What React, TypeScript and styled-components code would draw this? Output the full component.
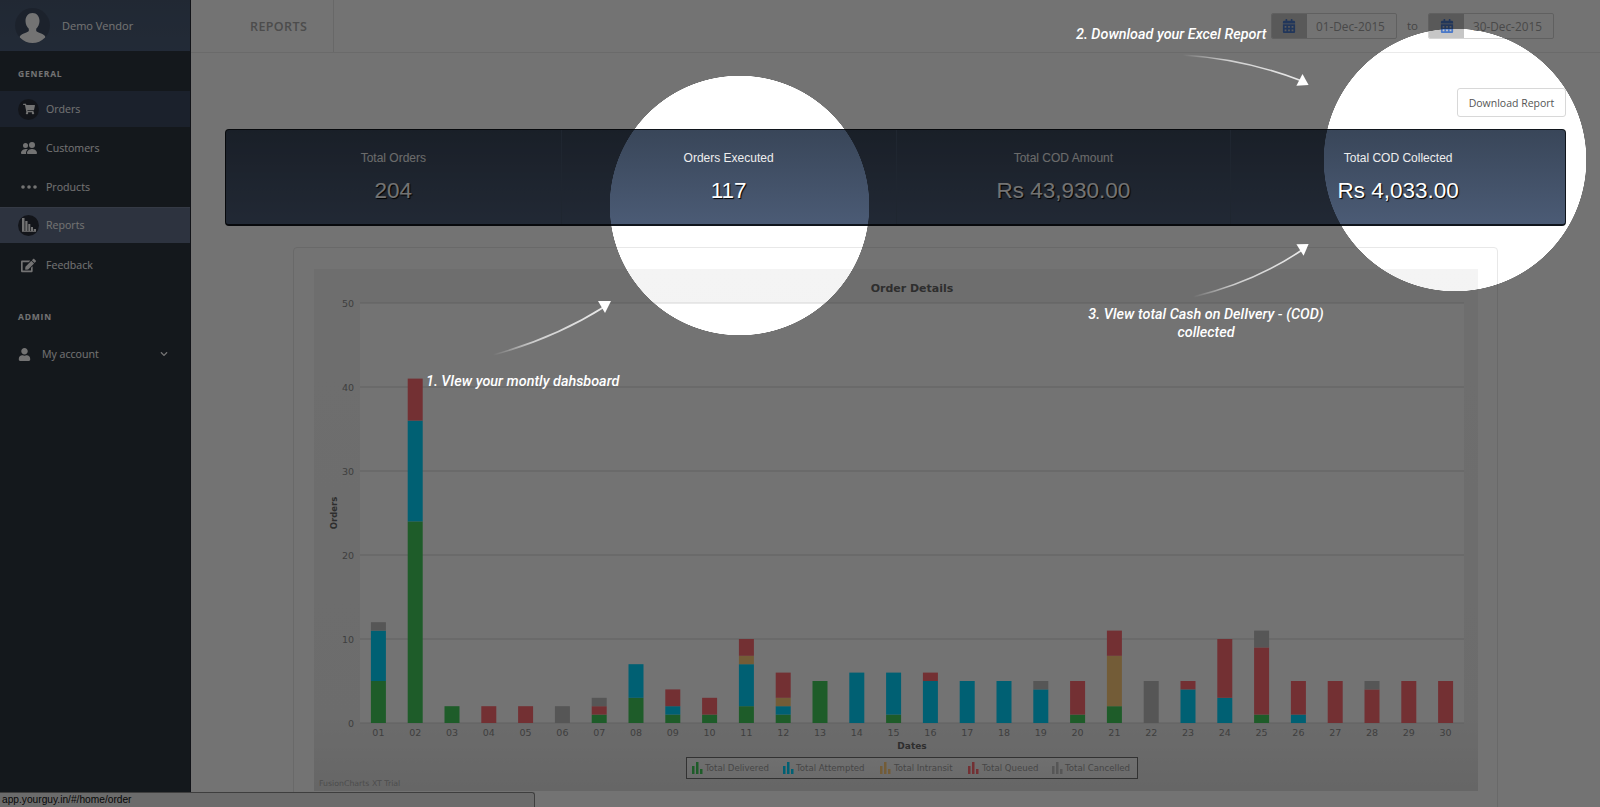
import React from "react";
import styled, { createGlobalStyle } from "styled-components";
import { FaCalendarAlt, FaChevronDown, FaEdit, FaShoppingCart, FaUser } from "react-icons/fa";
import { BsPeopleFill } from "react-icons/bs";

const GlobalStyle = createGlobalStyle`
  html, body { margin: 0; padding: 0; height: 100%; overflow: hidden; background: #fff; }
  body { font-family: "Open Sans", "Liberation Sans", sans-serif; }
  * { box-sizing: border-box; }
`;

const Page = styled.div`
  position: relative;
  display: flex;
  width: 1600px;
  height: 807px;
  overflow: hidden;
  background: #fff;
`;

// sidebar
const Sidebar = styled.aside`
  width: 191px;
  flex-shrink: 0;
  background: #2e353f;
  border-right: 1px solid #262c35;
`;

const Profile = styled.div`
  display: flex;
  align-items: center;
  gap: 12px;
  height: 51px;
  padding-left: 15px;
  background: linear-gradient(#4a5a72, #4d5e7a);
  color: #fff;
  font-size: 11px;
`;

const Avatar = styled.div`
  display: flex;
  align-items: flex-end;
  justify-content: center;
  width: 35px;
  height: 35px;
  border-radius: 50%;
  background: #3f4d63;
  overflow: hidden;
`;

const SectionLabel = styled.div<{ $height: number; $pad: number }>`
  display: flex;
  align-items: center;
  height: ${(p) => p.$height}px;
  padding: ${(p) => p.$pad}px 0 0 18px;
  color: #fff;
  font-size: 8.5px;
  font-weight: 700;
  letter-spacing: 0.8px;
`;

const Nav = styled.nav`
  display: flex;
  flex-direction: column;
  gap: 3px;
`;

const NavRow = styled.div<{ $tone?: "open" | "active" }>`
  display: flex;
  align-items: center;
  gap: 7px;
  height: 36px;
  margin: ${(p) => (p.$tone === "active" ? "-1px 0 1px" : "0")};
  padding-left: 18px;
  color: #fff;
  font-size: 10.6px;
  background: ${(p) => (p.$tone === "open" ? "#3c4962" : p.$tone === "active" ? "#65718c" : "transparent")};
  box-shadow: ${(p) => (p.$tone === "active" ? "inset 0 1px 0 #76819a" : "none")};
`;

const NavIcon = styled.span<{ $ring?: boolean }>`
  display: flex;
  align-items: center;
  justify-content: center;
  width: 21px;
  height: 21px;
  flex-shrink: 0;
  border-radius: 50%;
  background: ${(p) => (p.$ring ? "#2a303b" : "transparent")};
  color: #fff;
  font-size: 14px;
`;

const AccountRow = styled.div`
  display: flex;
  align-items: center;
  height: 36px;
  margin-top: 2px;
  padding: 0 22px 0 18px;
  color: #fff;
  font-size: 10.6px;
`;

const AccountName = styled.span`
  flex: 1;
  margin-left: 11px;
`;

// main column
const Main = styled.main`
  flex: 1;
  min-width: 0;
`;

const Topbar = styled.header`
  display: flex;
  align-items: center;
  justify-content: space-between;
  height: 53px;
  padding-right: 46px;
  border-bottom: 1px solid #eaeaea;
`;

const TopTitle = styled.div`
  display: flex;
  align-items: center;
  height: 52px;
  padding: 0 26px 0 59px;
  border-right: 1px solid #e6e6e6;
  color: #a8a8a8;
  font-size: 12.5px;
  font-weight: 600;
  letter-spacing: 0.4px;
`;

const DateRange = styled.div`
  display: flex;
  align-items: center;
  gap: 10px;
  margin-top: -1px;
  color: #9a9a9a;
  font-size: 11.5px;
`;

const DateField = styled.div`
  display: flex;
  width: 126px;
  height: 26px;
  border: 1px solid #d6d6d6;
  border-radius: 2px;
  overflow: hidden;
  background: #fff;
`;

const DateAddon = styled.span`
  display: flex;
  align-items: center;
  justify-content: center;
  width: 35px;
  background: #c6c6c6;
  color: #4a78c8;
  font-size: 14px;
`;

const DateValue = styled.span`
  flex: 1;
  padding-left: 9px;
  line-height: 24px;
  color: #a2a2a2;
  font-size: 11.8px;
`;

const Content = styled.div`
  padding: 35px 34px 0;
`;

const Actions = styled.div`
  display: flex;
  justify-content: flex-end;
`;

const DownloadButton = styled.button`
  width: 109px;
  height: 29px;
  padding: 0;
  border: 1px solid #d8d8d8;
  border-radius: 3px;
  background: #fff;
  color: #555;
  font-family: "Open Sans", sans-serif;
  font-size: 10.5px;
`;

const StatsPanel = styled.section`
  display: grid;
  grid-template-columns: repeat(4, 1fr);
  height: 97px;
  margin-top: 12px;
  border: 1px solid #10151c;
  border-bottom-width: 2px;
  border-radius: 4px;
  background: linear-gradient(#394659, #4b5b75);
`;

const StatCell = styled.div`
  display: flex;
  flex-direction: column;
  align-items: center;
  padding-top: 20px;
  border-left: 1px solid #46546a;
  font-family: "Liberation Sans", Arial, sans-serif;
  color: #fff;

  &:first-child {
    border-left: 0;
  }
`;

const StatLabel = styled.span`
  color: #eee;
  font-size: 12px;
  line-height: 16px;
`;

const StatValue = styled.span`
  margin-top: 12px;
  font-size: 22.5px;
  line-height: 26px;
  color: #fff;
  text-shadow: 1px 1px 1px #000;
`;

const ChartCard = styled.section`
  height: 600px;
  margin: 21px 68px 0;
  padding: 21px 20px;
  border: 1px solid #e8e8e8;
  border-radius: 4px;
`;

const ChartSvg = styled.svg`
  display: block;
`;

const StatusBar = styled.div`
  position: absolute;
  left: 0;
  bottom: 0;
  width: 535px;
  height: 15px;
  padding-left: 2px;
  border: 1px solid #8a8a8a;
  border-left: 0;
  border-bottom: 0;
  border-top-right-radius: 3px;
  background: #eee;
  color: #111;
  font-family: "Liberation Sans", Arial, sans-serif;
  font-size: 10.2px;
  line-height: 14px;
`;

// dim layer with the two spotlights cut out
const Dim = styled.div`
  position: absolute;
  inset: 0;
  background: rgba(0, 0, 0, 0.55);
  mask-image:
    radial-gradient(circle at 739.5px 205.5px, transparent 129.5px, #000 130px),
    radial-gradient(circle at 1455px 160px, transparent 131px, #000 131.5px);
  mask-composite: intersect;
`;

const ArrowLayer = styled.svg`
  position: absolute;
  inset: 0;
`;

const Callout = styled.div<{ $left: number; $top: number; $width?: number }>`
  position: absolute;
  left: ${(p) => p.$left}px;
  top: ${(p) => p.$top}px;
  width: ${(p) => (p.$width ? `${p.$width}px` : "auto")};
  color: #fff;
  font-family: "Roboto", sans-serif;
  font-size: 14.4px;
  font-style: italic;
  font-weight: 500;
  line-height: 18px;
  text-align: center;
  white-space: nowrap;
`;

const stats = [
  { label: "Total Orders", value: "204" },
  { label: "Orders Executed", value: "117" },
  { label: "Total COD Amount", value: "Rs 43,930.00" },
  { label: "Total COD Collected", value: "Rs 4,033.00" },
];

const colors = {
  delivered: "rgb(68,204,92)",
  attempted: "rgb(0,212,255)",
  intransit: "rgb(255,204,122)",
  queued: "rgb(255,106,114)",
  cancelled: "rgb(190,190,190)",
};

type Series = keyof typeof colors;

const order: Series[] = ["delivered", "attempted", "intransit", "queued", "cancelled"];

// delivered, attempted, intransit, queued, cancelled
const days = [
  [5, 6, 0, 0, 1], [24, 12, 0, 5, 0], [2, 0, 0, 0, 0], [0, 0, 0, 2, 0], [0, 0, 0, 2, 0],
  [0, 0, 0, 0, 2], [1, 0, 0, 1, 1], [3, 4, 0, 0, 0], [1, 1, 0, 2, 0], [1, 0, 0, 2, 0],
  [2, 5, 1, 2, 0], [1, 1, 1, 3, 0], [5, 0, 0, 0, 0], [0, 6, 0, 0, 0], [1, 5, 0, 0, 0],
  [0, 5, 0, 1, 0], [0, 5, 0, 0, 0], [0, 5, 0, 0, 0], [0, 4, 0, 0, 1], [1, 0, 0, 4, 0],
  [2, 0, 6, 3, 0], [0, 0, 0, 0, 5], [0, 4, 0, 1, 0], [0, 3, 0, 7, 0], [1, 0, 0, 8, 2],
  [0, 1, 0, 4, 0], [0, 0, 0, 5, 0], [0, 0, 0, 4, 1], [0, 0, 0, 5, 0], [0, 0, 0, 5, 0],
];

const legend: { key: Series; label: string; icon: number; text: number }[] = [
  { key: "delivered", label: "Total Delivered", icon: 378, text: 391 },
  { key: "attempted", label: "Total Attempted", icon: 469, text: 482 },
  { key: "intransit", label: "Total Intransit", icon: 566, text: 580 },
  { key: "queued", label: "Total Queued", icon: 654, text: 668 },
  { key: "cancelled", label: "Total Cancelled", icon: 738, text: 751 },
];

// chart geometry, relative to the canvas
const plotLeft = 46;
const plotRight = 1150;
const plotBottom = 454;
const unit = 8.4;
const slot = (plotRight - plotLeft) / 30;

const Chart = () => (
  <ChartSvg width={1164} height={522} fontFamily="'DejaVu Sans', sans-serif">
    <defs>
      <linearGradient id="canvasBg" x1="0" y1="0" x2="0" y2="1">
        <stop offset="0" stopColor="#f4f4f4" />
        <stop offset="0.85" stopColor="#f0f0f0" />
        <stop offset="1" stopColor="#e2e2e2" />
      </linearGradient>
      <linearGradient id="legendBg" x1="0" y1="0" x2="0" y2="1">
        <stop offset="0" stopColor="#f6f6f6" />
        <stop offset="1" stopColor="#eee" />
      </linearGradient>
    </defs>
    <rect width={1164} height={522} fill="url(#canvasBg)" />
    <rect x={plotLeft} y={34} width={plotRight - plotLeft} height={plotBottom - 34} fill="#fff" />
    <text x={598} y={23} textAnchor="middle" fontSize={11} fontWeight={700} fill="#666">Order Details</text>

    {[0, 10, 20, 30, 40, 50].map((v) => {
      const y = plotBottom - v * unit;
      return (
        <g key={v}>
          <line x1={plotLeft} x2={plotRight} y1={y} y2={y} stroke="#d6d6d6" />
          <text x={40} y={y + 3.5} textAnchor="end" fontSize={9.5} fill="#8c8c8c">{v}</text>
        </g>
      );
    })}

    {days.map((values, i) => {
      const x = plotLeft + slot * (i + 0.5);
      let base = plotBottom;
      return (
        <g key={i}>
          {values.map((v, s) => {
            if (!v) return null;
            const h = v * unit;
            base -= h;
            return <rect key={s} x={x - 7.5} y={base} width={15} height={h} fill={colors[order[s]]} />;
          })}
          <text x={x} y={467} textAnchor="middle" fontSize={9.5} fill="#8c8c8c">
            {String(i + 1).padStart(2, "0")}
          </text>
        </g>
      );
    })}

    <text x={598} y={480} textAnchor="middle" fontSize={9} fontWeight={700} fill="#666">Dates</text>
    <text x={23} y={244} textAnchor="middle" fontSize={8.5} fontWeight={700} fill="#666" transform="rotate(-90 23 244)">
      Orders
    </text>

    <rect x={372.5} y={488.5} width={451} height={21} fill="url(#legendBg)" stroke="#707070" />
    {legend.map((l) => (
      <g key={l.key}>
        <g fill={colors[l.key]}>
          <rect x={l.icon} y={497} width={2.5} height={8} />
          <rect x={l.icon + 4} y={493} width={2.5} height={12} />
          <rect x={l.icon + 8} y={500} width={2.5} height={5} />
        </g>
        <text x={l.text} y={502} fontSize={8.6} fill="#9c9c9c">{l.label}</text>
      </g>
    ))}
    <text x={5} y={517} fontSize={7.8} fill="#aaa">FusionCharts XT Trial</text>
  </ChartSvg>
);

const ReportsGlyph = () => (
  <svg width="14" height="14" viewBox="0 0 14 14" fill="#fff">
    <path d="M0 0h2.500v13H0zM3.300 3h2.200v10H3.300zM6.300 6h2v7h-2zM9 9h2v4H9zM11.700 11H14v2h-2.300z" />
    <path d="M0 13.200h14V14H0z" />
  </svg>
);

const DotsGlyph = () => (
  <svg width="16" height="6" viewBox="0 0 16 6" fill="#fff">
    <circle cx="2" cy="3" r="1.800" />
    <circle cx="8" cy="3" r="1.800" />
    <circle cx="14" cy="3" r="1.800" />
  </svg>
);

const AvatarGlyph = () => (
  <svg width="27" height="31" viewBox="0 0 27 31" fill="#fff">
    <path d="M13.500 1c4.300 0 7 3.400 7 8 0 3.300-1.500 6-3.300 7.700v2.300c1 1.300 6 2.300 8.300 4.500 1 1 1.500 3 1.500 7.500H0c0-4.500.5-6.500 1.500-7.500 2.300-2.200 7.300-3.200 8.300-4.500v-2.300C8 15 6.500 12.300 6.500 9c0-4.600 2.700-8 7-8z" />
  </svg>
);

const Arrow = ({ id, d, from, to, head }: { id: string; d: string; from: number[]; to: number[]; head: string }) => (
  <g>
    <defs>
      <linearGradient id={id} gradientUnits="userSpaceOnUse" x1={from[0]} y1={from[1]} x2={to[0]} y2={to[1]}>
        <stop offset="0" stopColor="#fff" stopOpacity="0" />
        <stop offset="0.35" stopColor="#fff" stopOpacity="0.65" />
        <stop offset="1" stopColor="#fff" stopOpacity="0.85" />
      </linearGradient>
    </defs>
    <path d={d} fill="none" stroke={`url(#${id})`} strokeWidth={1.6} />
    <polygon points={head} fill="#fff" />
  </g>
);

const App = () => {
  return (
    <Page>
      <GlobalStyle />
      <Sidebar>
        <Profile>
          <Avatar>
            <AvatarGlyph />
          </Avatar>
          Demo Vendor
        </Profile>
        <SectionLabel $height={40} $pad={4}>GENERAL</SectionLabel>
        <Nav>
          <NavRow $tone="open">
            <NavIcon $ring><FaShoppingCart size={12} /></NavIcon>
            Orders
          </NavRow>
          <NavRow>
            <NavIcon><BsPeopleFill size={16} /></NavIcon>
            Customers
          </NavRow>
          <NavRow>
            <NavIcon><DotsGlyph /></NavIcon>
            Products
          </NavRow>
          <NavRow $tone="active">
            <NavIcon $ring><ReportsGlyph /></NavIcon>
            Reports
          </NavRow>
          <NavRow>
            <NavIcon><FaEdit size={15} /></NavIcon>
            Feedback
          </NavRow>
        </Nav>
        <SectionLabel $height={51} $pad={15}>ADMIN</SectionLabel>
        <AccountRow>
          <FaUser size={13} />
          <AccountName>My account</AccountName>
          <FaChevronDown size={8} />
        </AccountRow>
      </Sidebar>

      <Main>
        <Topbar>
          <TopTitle>REPORTS</TopTitle>
          <DateRange>
            <DateField>
              <DateAddon><FaCalendarAlt /></DateAddon>
              <DateValue>01-Dec-2015</DateValue>
            </DateField>
            to
            <DateField>
              <DateAddon><FaCalendarAlt /></DateAddon>
              <DateValue>30-Dec-2015</DateValue>
            </DateField>
          </DateRange>
        </Topbar>
        <Content>
          <Actions>
            <DownloadButton>Download Report</DownloadButton>
          </Actions>
          <StatsPanel>
            {stats.map((s) => (
              <StatCell key={s.label}>
                <StatLabel>{s.label}</StatLabel>
                <StatValue>{s.value}</StatValue>
              </StatCell>
            ))}
          </StatsPanel>
          <ChartCard>
            <Chart />
          </ChartCard>
        </Content>
      </Main>

      <StatusBar>app.yourguy.in/#/home/order</StatusBar>
      <Dim />

      <ArrowLayer width={1600} height={807}>
        <Arrow id="a1" d="M493 355 Q555 338 604 307" from={[493, 355]} to={[604, 307]} head="598,301 611,301 605,313" />
        <Arrow id="a2" d="M1183 55 Q1245 59 1302 81" from={[1183, 55]} to={[1302, 81]} head="1302.500,74 1308.600,85 1296.400,85.700" />
        <Arrow id="a3" d="M1193 297 Q1255 282 1302 250" from={[1193, 297]} to={[1302, 250]} head="1296.400,244.300 1308.600,244 1303.600,255.700" />
      </ArrowLayer>
      <Callout $left={426} $top={373}>1. VIew your montly dahsboard</Callout>
      <Callout $left={1076} $top={26}>2. Download your Excel Report</Callout>
      <Callout $left={1056} $top={306} $width={300}>
        3. VIew total Cash on DelIvery - (COD)
        <br />
        collected
      </Callout>
    </Page>
  );
};

export default App;
